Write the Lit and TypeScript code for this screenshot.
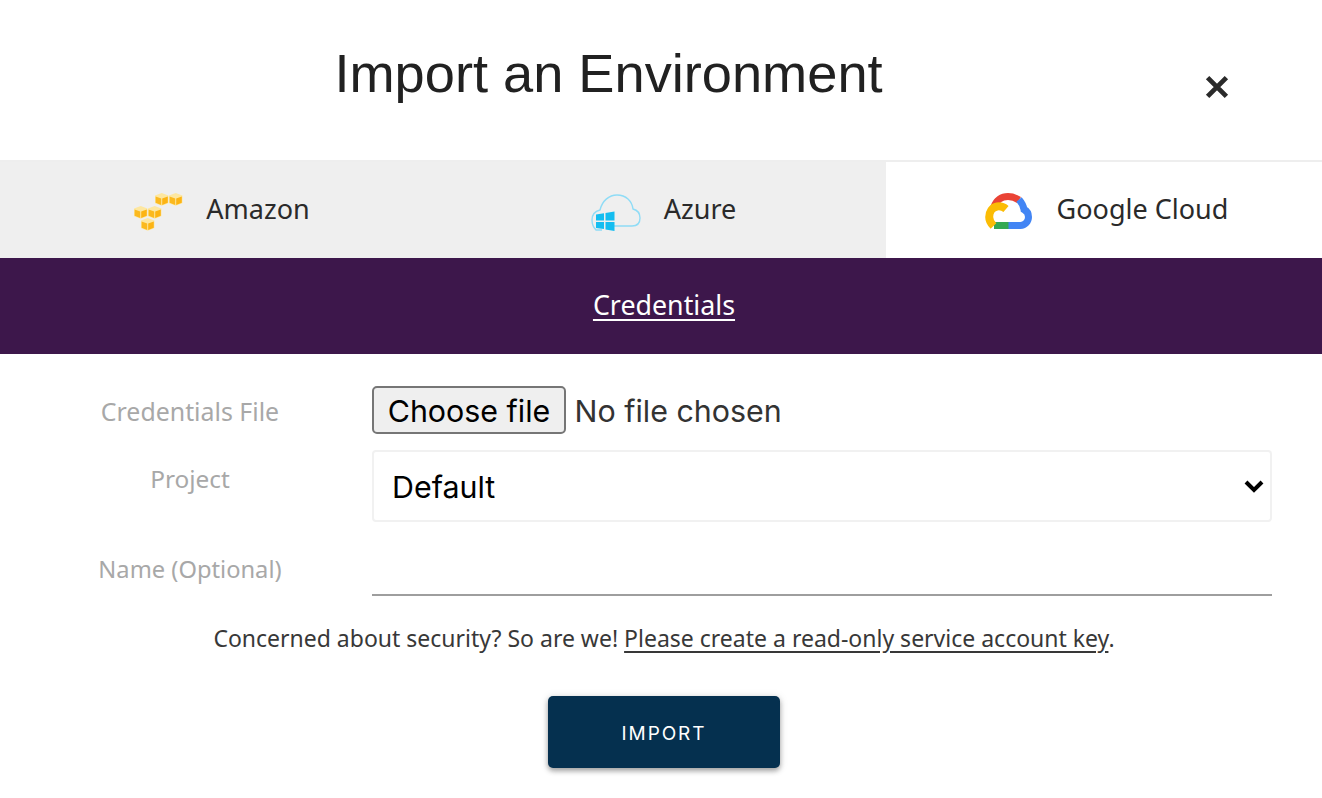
import { LitElement, html, css, svg } from "lit";
import { customElement } from "lit/decorators.js";

@customElement("app-root")
export class AppRoot extends LitElement {
  static styles = css`
    :host { display: block; width: 1322px; height: 798px; overflow: hidden; background: #fff; color: #212121; font-family: "Noto Sans", sans-serif; }
    * { box-sizing: border-box; }
    .header { height: 160px; display: flex; justify-content: center; position: relative; padding-right: 105px; }
    h1 { margin: 0; padding-top: 40px; font: 400 54.2px/66px "Liberation Sans", Arial, sans-serif; color: #212121; }
    .close { position: absolute; left: 1205px; top: 75px; width: 24px; height: 24px; padding: 0; border: 0; background: none; display: block; }
    .tabs { display: flex; height: 98px; border-top: 2px solid #eee; background: #efefef; }
    .tab { display: flex; align-items: center; justify-content: center; gap: 23px; font-size: 27px; color: #2a2a2a; flex: 0 0 443px; }
    .tab span { padding-bottom: 4px; }
    .tab svg { margin-top: 4px; }
    .tab.azure { gap: 23px; padding-right: 2px; }
    .tab.active { background: #fff; flex: 1 1 auto; gap: 25px; padding-left: 5px; }
    .band { height: 96px; background: #3d174b; display: flex; align-items: center; justify-content: center; padding: 0 0 4px 6px; }
    .band a { color: #fff; font-size: 26.8px; text-decoration: underline; text-underline-offset: 4px; text-decoration-thickness: 2px; }
    .form { padding: 32px 50px 0 0; display: grid; grid-template-columns: 372px 1fr; }
    .label { color: #a8a8a8; font-size: 24.9px; text-align: center; padding-left: 8px; width: 372px; white-space: nowrap; }
    .label.file { line-height: 50px; height: 48px; }
    .label.project { margin-top: 16px; line-height: 58px; font-size: 24.4px; }
    .label.name { line-height: 94px; height: 74px; font-size: 23.7px; }
    .file-row { display: flex; align-items: center; height: 48px; gap: 8.5px; font: 30.4px "Inter", sans-serif; color: #333; }
    .file-row span { padding-top: 2px; }
    .file-btn { width: 194px; height: 48px; padding: 2px 0 0; font: 30.4px "Inter", sans-serif; color: #000; background: #efefef; border: 2px solid #767676; border-radius: 5px; }
    .select-wrap { position: relative; height: 72px; margin-top: 16px; }
    select { width: 100%; height: 72px; appearance: none; -webkit-appearance: none; background: #fff; border: 2px solid #f1f1f1; border-radius: 4px; padding: 2px 18px 0; font: 30.4px "Inter", sans-serif; color: #000; }
    .chevron { position: absolute; right: 8px; top: 29px; width: 20px; height: 14px; pointer-events: none; }
    .name-input { height: 74px; margin-top: 0; border: 0; border-bottom: 2px solid #9e9e9e; width: 100%; outline: none; background: none; }
    .note { margin-top: 26px; padding-left: 6px; text-align: center; font-size: 23px; line-height: 32px; color: #383838; white-space: nowrap; }
    .note a { color: inherit; text-decoration: underline; text-underline-offset: 4px; }
    .actions { display: flex; justify-content: center; margin-top: 42px; padding-left: 6px; }
    .import { width: 232px; height: 72px; padding: 3px 0 0; background: #05304f; color: #fff; border: 0; border-radius: 5px; font: 400 19px "Inter", sans-serif; letter-spacing: 1.9px; box-shadow: 0 3px 5px rgba(0,0,0,.3), 0 1px 8px rgba(0,0,0,.15); }
  `;

  render() {
    return html`
      <div class="header">
        <h1>Import an Environment</h1>
        <button class="close" aria-label="Close">
          <svg viewBox="0 0 24 24" width="24" height="24"><path d="M2.6 2.6 21.4 21.4M21.4 2.6 2.6 21.4" stroke="#2a2a2a" stroke-width="4.8" fill="none"/></svg>
        </button>
      </div>
      <div class="tabs">
        <div class="tab">
          <svg width="50" height="38" viewBox="0 0 50 38">
            ${[[22, 0], [36, 0], [1, 13], [15, 13], [8, 25]].map(([x, y]) => svg`
              <g transform="translate(${x} ${y})">
                <path d="M6.7 0 13.4 2.4V10.2L6.7 12.8 0 10.2V2.4Z" fill="#fde7a0"/>
                <path d="M.6 3.4 6.2 5.4V12L.6 9.8Z" fill="#fbb91f"/>
                <path d="M12.8 3.4 7.2 5.4V12L12.8 9.8Z" fill="#fcb414"/>
              </g>`)}
          </svg>
          <span>Amazon</span>
        </div>
        <div class="tab azure">
          <svg width="50" height="38" viewBox="0 0 50 38">
            <path d="M11 37H5C2 34 1 30 1 27 1 21 5 18 9 17 11 8 18 2 26 2 35 2 41 8 42 16 46 17 49 20 49 25 49 30 46 33 41 33H20" fill="none" stroke="#8fdcf6" stroke-width="1.4"/>
            <path d="M5 21.5 13 20.3V27.5H5ZM14.5 20 23.5 18.5V27.5H14.5ZM5 29H13V36L5 35ZM14.5 29H23.5V38L14.5 36.5Z" fill="#14bdf0"/>
          </svg>
          <span>Azure</span>
        </div>
        <div class="tab active">
          <svg width="47" height="38" viewBox="0 0 47 38">
            <g fill="none">
              <path d="M9 14C11 7 17 3.5 23 3.5 27 3.5 31 5 34 7" stroke="#ea4335" stroke-width="7"/>
              <path d="M34 6.5C37 10 38.5 13 39 16.5 42 18 43.5 21 43.5 24 43.5 28.5 40 32.5 35.5 32.5H23" stroke="#4285f4" stroke-width="7"/>
              <path d="M23.5 32.5H9" stroke="#34a853" stroke-width="7"/>
              <path d="M21 16C18 13.5 15 13 12 13.5 7 14.5 4.2 19 4.2 24 4.2 27 5.5 30 8.5 33" stroke="#fbbc05" stroke-width="8"/>
            </g>
          </svg>
          <span>Google Cloud</span>
        </div>
      </div>
      <div class="band"><a href="#">Credentials</a></div>
      <div class="form">
        <div class="label file">Credentials File</div>
        <div class="file-row"><button class="file-btn">Choose file</button><span>No file chosen</span></div>
        <div class="label project">Project</div>
        <div class="select-wrap">
          <select><option>Default</option></select>
          <svg class="chevron" viewBox="0 0 20 14"><path d="M2 3 10 11 18 3" fill="none" stroke="#000" stroke-width="4"/></svg>
        </div>
        <div class="label name">Name (Optional)</div>
        <input class="name-input" type="text" />
      </div>
      <div class="note">Concerned about security? So are we! <a href="#">Please create a read-only service account key</a>.</div>
      <div class="actions"><button class="import">IMPORT</button></div>
    `;
  }
}
